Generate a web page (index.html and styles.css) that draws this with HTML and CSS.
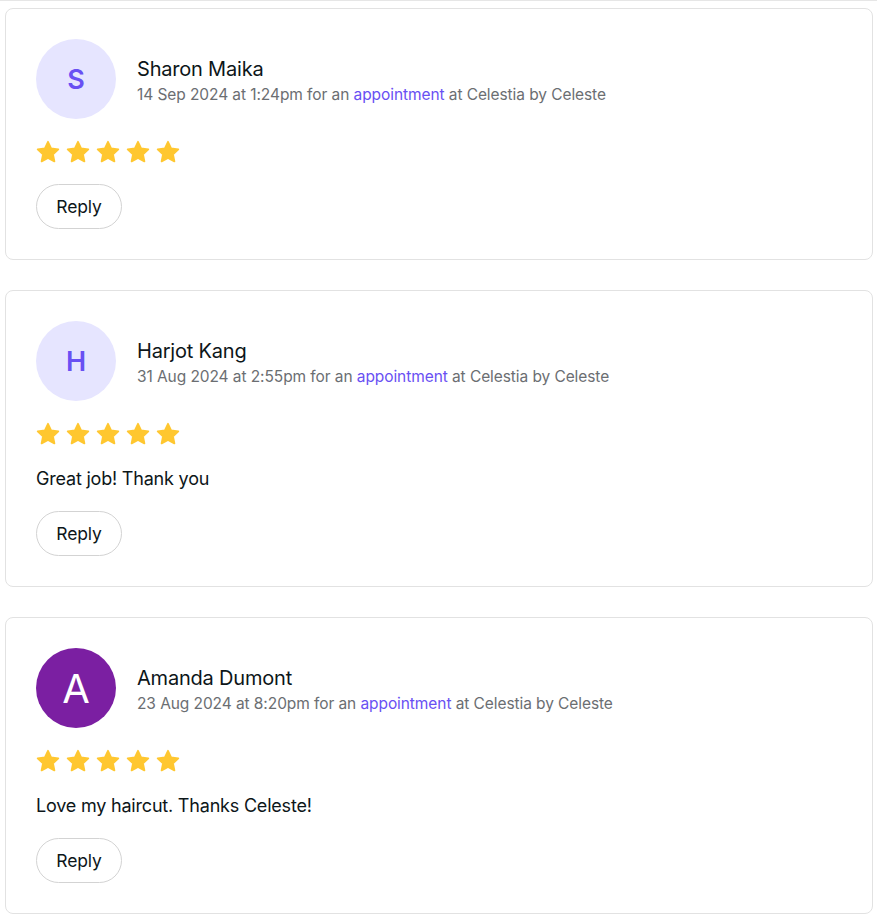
FILE: index.html
```html
<!DOCTYPE html>
<html lang="en">
<head>
<meta charset="utf-8">
<title>Reviews</title>
<link rel="stylesheet" href="styles.css">
</head>
<body>
<div class="prev-edge"></div>
<div class="list">
  <section class="card">
    <div class="head">
      <div class="avatar soft">S</div>
      <div class="who">
        <div class="name">Sharon Maika</div>
        <div class="meta">14 Sep 2024 at 1:24pm for an <a href="#" class="link">appointment</a> at Celestia by Celeste</div>
      </div>
    </div>
    <div class="stars">
      <svg viewBox="0 0 24 24"><path d="M12 1.8l3.1 6.6 7.2.9-5.3 5 1.4 7.1L12 17.9l-6.4 3.5L7 14.3 1.7 9.3l7.2-.9z"/></svg>
      <svg viewBox="0 0 24 24"><path d="M12 1.8l3.1 6.6 7.2.9-5.3 5 1.4 7.1L12 17.9l-6.4 3.5L7 14.3 1.7 9.3l7.2-.9z"/></svg>
      <svg viewBox="0 0 24 24"><path d="M12 1.8l3.1 6.6 7.2.9-5.3 5 1.4 7.1L12 17.9l-6.4 3.5L7 14.3 1.7 9.3l7.2-.9z"/></svg>
      <svg viewBox="0 0 24 24"><path d="M12 1.8l3.1 6.6 7.2.9-5.3 5 1.4 7.1L12 17.9l-6.4 3.5L7 14.3 1.7 9.3l7.2-.9z"/></svg>
      <svg viewBox="0 0 24 24"><path d="M12 1.8l3.1 6.6 7.2.9-5.3 5 1.4 7.1L12 17.9l-6.4 3.5L7 14.3 1.7 9.3l7.2-.9z"/></svg>
    </div>
    <button class="reply">Reply</button>
  </section>

  <section class="card">
    <div class="head">
      <div class="avatar soft">H</div>
      <div class="who">
        <div class="name">Harjot Kang</div>
        <div class="meta">31 Aug 2024 at 2:55pm for an <a href="#" class="link">appointment</a> at Celestia by Celeste</div>
      </div>
    </div>
    <div class="stars">
      <svg viewBox="0 0 24 24"><path d="M12 1.8l3.1 6.6 7.2.9-5.3 5 1.4 7.1L12 17.9l-6.4 3.5L7 14.3 1.7 9.3l7.2-.9z"/></svg>
      <svg viewBox="0 0 24 24"><path d="M12 1.8l3.1 6.6 7.2.9-5.3 5 1.4 7.1L12 17.9l-6.4 3.5L7 14.3 1.7 9.3l7.2-.9z"/></svg>
      <svg viewBox="0 0 24 24"><path d="M12 1.8l3.1 6.6 7.2.9-5.3 5 1.4 7.1L12 17.9l-6.4 3.5L7 14.3 1.7 9.3l7.2-.9z"/></svg>
      <svg viewBox="0 0 24 24"><path d="M12 1.8l3.1 6.6 7.2.9-5.3 5 1.4 7.1L12 17.9l-6.4 3.5L7 14.3 1.7 9.3l7.2-.9z"/></svg>
      <svg viewBox="0 0 24 24"><path d="M12 1.8l3.1 6.6 7.2.9-5.3 5 1.4 7.1L12 17.9l-6.4 3.5L7 14.3 1.7 9.3l7.2-.9z"/></svg>
    </div>
    <p class="text">Great job! Thank you</p>
    <button class="reply">Reply</button>
  </section>

  <section class="card">
    <div class="head">
      <div class="avatar solid">A</div>
      <div class="who">
        <div class="name">Amanda Dumont</div>
        <div class="meta">23 Aug 2024 at 8:20pm for an <a href="#" class="link">appointment</a> at Celestia by Celeste</div>
      </div>
    </div>
    <div class="stars">
      <svg viewBox="0 0 24 24"><path d="M12 1.8l3.1 6.6 7.2.9-5.3 5 1.4 7.1L12 17.9l-6.4 3.5L7 14.3 1.7 9.3l7.2-.9z"/></svg>
      <svg viewBox="0 0 24 24"><path d="M12 1.8l3.1 6.6 7.2.9-5.3 5 1.4 7.1L12 17.9l-6.4 3.5L7 14.3 1.7 9.3l7.2-.9z"/></svg>
      <svg viewBox="0 0 24 24"><path d="M12 1.8l3.1 6.6 7.2.9-5.3 5 1.4 7.1L12 17.9l-6.4 3.5L7 14.3 1.7 9.3l7.2-.9z"/></svg>
      <svg viewBox="0 0 24 24"><path d="M12 1.8l3.1 6.6 7.2.9-5.3 5 1.4 7.1L12 17.9l-6.4 3.5L7 14.3 1.7 9.3l7.2-.9z"/></svg>
      <svg viewBox="0 0 24 24"><path d="M12 1.8l3.1 6.6 7.2.9-5.3 5 1.4 7.1L12 17.9l-6.4 3.5L7 14.3 1.7 9.3l7.2-.9z"/></svg>
    </div>
    <p class="text">Love my haircut. Thanks Celeste!</p>
    <button class="reply">Reply</button>
  </section>
</div>
</body>
</html>
```
FILE: styles.css
```css
* { box-sizing: border-box; }
html, body { margin: 0; padding: 0; background: #fff; }
body {
  font-family: Inter, "Noto Sans", "Liberation Sans", sans-serif;
  color: #0d1619;
}
.prev-edge {
  height: 1px;
  background: #e6e6e6;
}
.list {
  display: flex;
  flex-direction: column;
  gap: 30px;
  padding: 7px 4px 0 5px;
}
.card {
  border: 1px solid #e2e2e2;
  border-radius: 8px;
  padding: 30px 30px 30px;
  display: flex;
  flex-direction: column;
  align-items: flex-start;
  gap: 20px;
}
.head {
  display: flex;
  align-items: center;
  gap: 21px;
  margin-bottom: 1px;
}
.avatar {
  width: 80px;
  height: 80px;
  border-radius: 50%;
  display: flex;
  align-items: center;
  justify-content: center;
  flex: none;
}
.avatar.soft {
  background: #e6e5ff;
  color: #6950f3;
  font-size: 27px;
  font-weight: 600;
}
.avatar.solid {
  background: #7b1fa2;
  color: #fff;
  font-size: 40px;
  font-weight: 400;
}
.who {
  display: flex;
  flex-direction: column;
  gap: 2px;
  padding-top: 4px;
}
.name {
  font-size: 20px;
  line-height: 26px;
  color: #0d1619;
  letter-spacing: -0.2px;
}
.meta {
  font-size: 15.5px;
  line-height: 22px;
  color: #6b6e72;
  letter-spacing: -0.08px;
}
.link { color: #6950f3; text-decoration: none; }
.stars { display: flex; gap: 6px; height: 24px; }
.stars svg {
  width: 24px;
  height: 24px;
  fill: #ffc730;
  stroke: #ffc730;
  stroke-width: 1.8;
  stroke-linejoin: round;
}
.text {
  margin: 0;
  font-size: 18px;
  line-height: 25px;
  letter-spacing: -0.2px;
  color: #0d1619;
}
.reply {
  font-family: inherit;
  font-size: 17.5px;
  color: #0d1619;
  background: #fff;
  border: 1px solid #d3d3d3;
  border-radius: 23px;
  height: 45px;
  width: 86px;
  padding: 0;
  letter-spacing: -0.15px;
}
```
